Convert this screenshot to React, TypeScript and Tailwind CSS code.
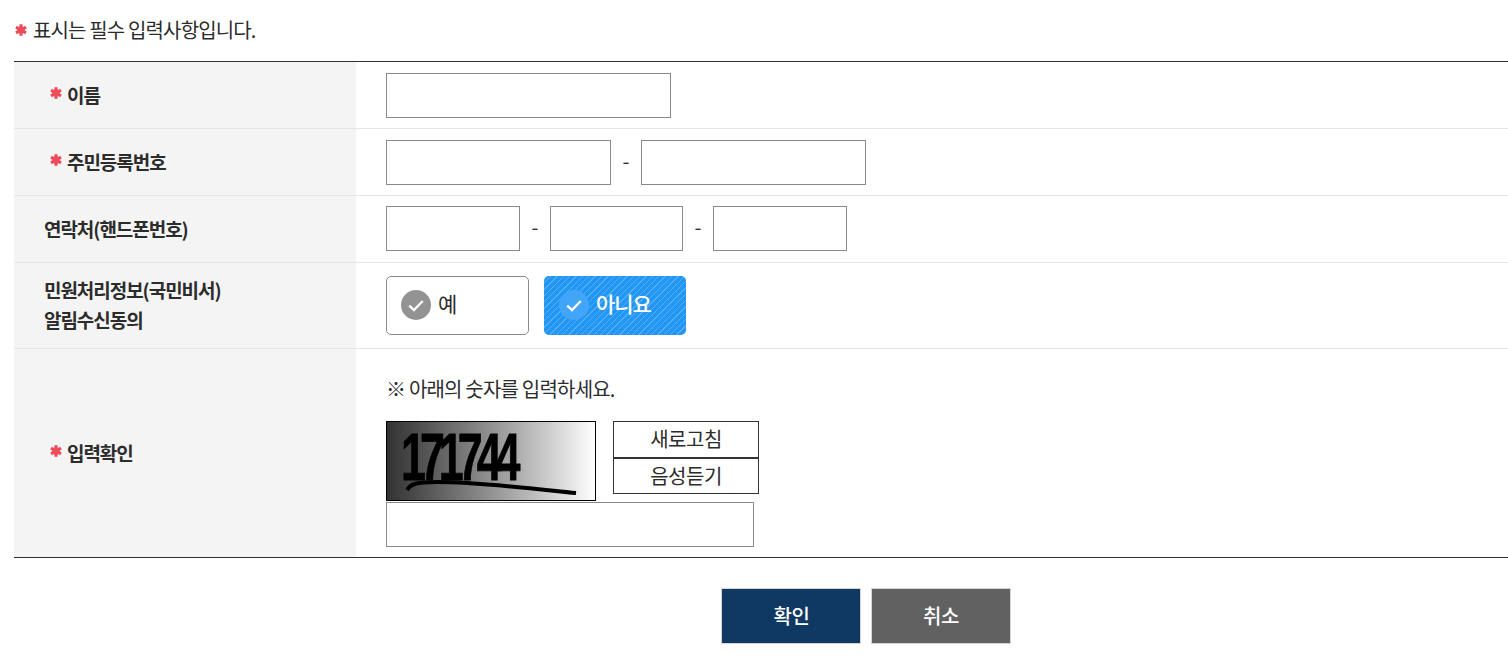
const font = { fontFamily: '"Noto Sans CJK KR", "Noto Sans", sans-serif' };

function Star({ className = "" }: { className?: string }) {
  return (
    <svg viewBox="0 0 12 12" className={`inline-block h-[12px] w-[12px] shrink-0 ${className}`}>
      <g stroke="#ee4b5b" strokeWidth="3" strokeLinecap="butt">
        <path d="M6 .2V11.8" />
        <path d="M1 3.1 11 8.9" />
        <path d="M11 3.1 1 8.9" />
      </g>
      <circle cx="6" cy="6" r="3.8" fill="#ee4b5b" />
    </svg>
  );
}

function Field({ w }: { w: string }) {
  return <input className={`h-[45px] ${w} border border-[#8a8a8a] bg-white`} />;
}

function Th({ children, req, h }: { children: React.ReactNode; req?: boolean; h: string }) {
  return (
    <div className={`flex ${h} w-[342px] shrink-0 items-center bg-[#f4f4f4] ${req ? "pl-[36px]" : "pl-[30px]"} text-[19px] font-bold leading-[30px] tracking-[-1.05px] text-[#2c2c2c]`}>
      {req && <Star className="mr-[5px] mb-[4px]" />}
      <div className={req ? "" : "pb-[1px]"}>{children}</div>
    </div>
  );
}

function Row({ children, th, req, h, last }: { children: React.ReactNode; th: React.ReactNode; req?: boolean; h: string; last?: boolean }) {
  return (
    <div className={`flex border-b ${last ? "border-[#333333]" : "border-[#e6e6e6]"}`}>
      <Th req={req} h={h}>{th}</Th>
      <div className="flex flex-1 items-center pl-[30px]">{children}</div>
    </div>
  );
}

function Dash() {
  return <span className="mb-[3px] text-[20px] leading-[19px] text-[#333]">-</span>;
}

function Check({ bg }: { bg: string }) {
  return (
    <span className={`flex h-[30px] w-[30px] items-center justify-center rounded-full ${bg}`}>
      <svg viewBox="0 0 16 16" className="h-[18px] w-[18px]" fill="none" stroke="#fff" strokeWidth="2">
        <path d="M2 8.5 6.2 12.5 14 4.5" />
      </svg>
    </span>
  );
}

export default function App() {
  return (
    <div style={font} className="h-[664px] w-[1508px] overflow-hidden bg-white pl-[14px] text-[#2c2c2c]">
      <div className="flex h-[61px] items-center pb-[3px] text-[20px] leading-[27px] tracking-[-0.85px]">
        <Star className="ml-[1px] mr-[6px] mt-[1px]" />
        <span>표시는 필수 입력사항입니다.</span>
      </div>
      <div className="border-t border-[#333333]">
        <Row th="이름" req h="h-[66px]">
          <Field w="w-[285px]" />
        </Row>
        <Row th="주민등록번호" req h="h-[66px]">
          <div className="flex items-center">
            <Field w="w-[225px]" />
            <span className="flex w-[30px] justify-center"><Dash /></span>
            <Field w="w-[225px]" />
          </div>
        </Row>
        <Row th="연락처(핸드폰번호)" h="h-[66px]">
          <div className="flex items-center pb-[2px]">
            <Field w="w-[134px]" />
            <span className="flex w-[30px] justify-center"><Dash /></span>
            <Field w="w-[133px]" />
            <span className="flex w-[30px] justify-center"><Dash /></span>
            <Field w="w-[134px]" />
          </div>
        </Row>
        <Row th={<>민원처리정보(국민비서)<br />알림수신동의</>} h="h-[85px]">
          <div className="flex gap-[15px]">
            <div className="flex h-[59px] w-[143px] items-center gap-[7px] rounded-[5px] border border-[#8a8a8a] bg-white pb-[1px] pl-[14px] text-[21px] tracking-[-0.7px]">
              <Check bg="bg-[#939393]" />
              <span className="mb-[3px]">예</span>
            </div>
            <div className="flex h-[59px] w-[142px] items-center gap-[7px] rounded-[5px] bg-[#2196f3] bg-[repeating-linear-gradient(135deg,rgba(255,255,255,0.22)_0px,rgba(255,255,255,0.22)_1px,transparent_1px,transparent_4.5px)] pb-[1px] pl-[15px] text-[21px] font-medium tracking-[-1.1px] text-white">
              <Check bg="bg-[#42a5f8]" />
              <span className="mb-[3px]">아니요</span>
            </div>
          </div>
        </Row>
        <Row th="입력확인" req h="h-[208px]" last>
          <div className="flex flex-col pt-[16px]">
            <div className="h-[27px] text-[20px] leading-[27px] tracking-[-0.8px]">※ 아래의 숫자를 입력하세요.</div>
            <div className="mt-[19px] flex">
              <div className="relative h-[80px] w-[210px] overflow-hidden border border-black bg-gradient-to-r from-[#333333] to-[#ffffff]">
                <span className="absolute left-[14px] top-[3px] origin-top-left scale-x-[0.8] scale-y-[1.18] font-['Liberation_Sans',sans-serif] text-[56px] font-bold leading-[56px] tracking-[-7.5px] text-black [-webkit-text-stroke:0.7px_#000]">171744</span>
                <svg viewBox="0 0 208 78" className="absolute inset-0 h-full w-full" fill="none">
                  <path d="M20 68 C24 62 28 60 50 60 C90 60 140 66 189 71" stroke="#000" strokeWidth="4" />
                </svg>
              </div>
              <div className="ml-[17px] flex w-[146px] flex-col text-[20px] tracking-[-0.5px]">
                <div className="flex h-[37px] items-center justify-center border border-[#333] pb-[2px]">새로고침</div>
                <div className="flex h-[36px] items-center justify-center border border-[#333]">음성듣기</div>
              </div>
            </div>
            <div className="mt-[1px]">
              <Field w="w-[368px]" />
            </div>
          </div>
        </Row>
      </div>
      <div className="mt-[30px] flex justify-center gap-[10px] pl-[210px]">
        <button className="h-[56px] w-[140px] border border-[#d5d5d5] bg-[#0f3963] pl-[1px] text-[20px] font-medium tracking-[-0.5px] text-white">확인</button>
        <button className="h-[56px] w-[140px] border border-[#d5d5d5] bg-[#616161] text-[20px] font-medium tracking-[-0.5px] text-white">취소</button>
      </div>
    </div>
  );
}
